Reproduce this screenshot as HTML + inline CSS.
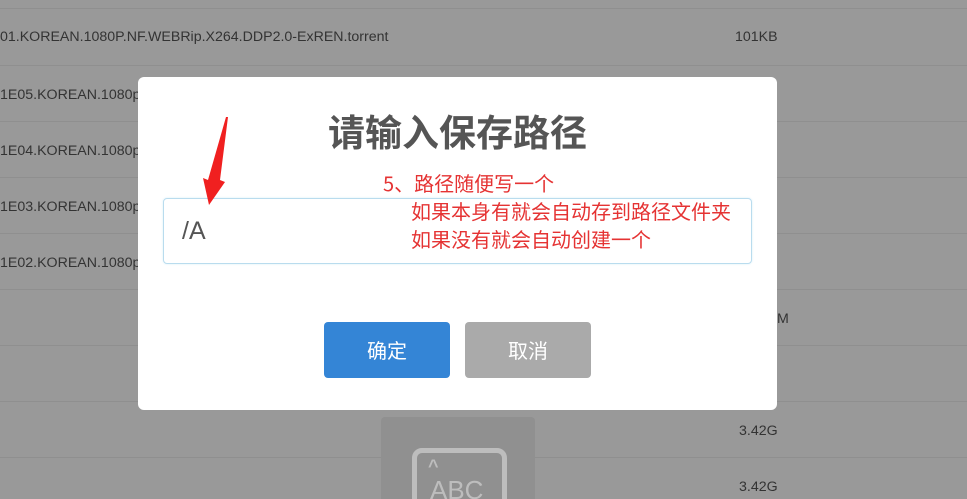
<!DOCTYPE html>
<html style="overflow:hidden;width:967px;height:499px"><head><meta charset="utf-8"><style>
body{margin:0;width:967px;height:499px;overflow:hidden;background:#999;font-family:"Liberation Sans","Noto Sans CJK SC",sans-serif;position:relative}
.sep{position:absolute;left:0;width:967px;height:1px;background:#8f8f8f}
.t{position:absolute;color:#333;font-size:14.2px;white-space:nowrap}
.dlg{position:absolute;left:138px;top:77px;width:639px;height:333px;background:#fff;border-radius:6px}
.red{position:absolute;color:#e53333;font-size:20px;white-space:nowrap;font-family:"Noto Sans CJK SC",sans-serif;line-height:22px}
</style></head><body>
<div class="sep" style="top:8px"></div>
<div class="sep" style="top:65px"></div>
<div class="sep" style="top:121px"></div>
<div class="sep" style="top:177px"></div>
<div class="sep" style="top:233px"></div>
<div class="sep" style="top:289px"></div>
<div class="sep" style="top:345px"></div>
<div class="sep" style="top:401px"></div>
<div class="sep" style="top:457px"></div>
<div class="t" style="left:0;top:29px">01.KOREAN.1080P.NF.WEBRip.X264.DDP2.0-ExREN.torrent</div>
<div class="t" style="left:735px;top:29px">101KB</div>
<div class="t" style="left:0;top:87px">1E05.KOREAN.1080p.</div>
<div class="t" style="left:0;top:143px">1E04.KOREAN.1080p.</div>
<div class="t" style="left:0;top:199px">1E03.KOREAN.1080p.</div>
<div class="t" style="left:0;top:255px">1E02.KOREAN.1080p.</div>
<div class="t" style="left:777px;top:311px">M</div>
<div class="t" style="left:739px;top:423px">3.42G</div>
<div class="t" style="left:739px;top:479px">3.42G</div>
<div style="position:absolute;left:381px;top:417px;width:154px;height:82px;background:#909090;border-radius:4px 4px 0 0;overflow:hidden">
<div style="position:absolute;left:31px;top:31px;width:85px;height:70px;border:5px solid #bdbdbd;border-radius:10px"></div>
<div style="position:absolute;left:49px;top:58px;color:#bdbdbd;font-size:26px">ABC</div>
<div style="position:absolute;left:47px;top:39px;color:#bdbdbd;font-size:18px;font-weight:bold">^</div>
</div>
<div class="dlg"></div>
<div style="position:absolute;left:138px;top:105px;width:639px;text-align:center;font-size:37px;font-weight:bold;color:#555;font-family:'Noto Sans CJK SC',sans-serif;line-height:50px">请输入保存路径</div>
<div style="position:absolute;left:163px;top:198px;width:587px;height:64px;border:1px solid #b9dcee;border-radius:4px;box-shadow:0 0 2px #d8eef8"></div>
<div style="position:absolute;left:182px;top:217px;font-size:25px;color:#555">/A</div>
<div style="position:absolute;left:324px;top:322px;width:126px;height:56px;background:#3485d6;border-radius:4px;color:#fff;font-size:20px;text-align:center;line-height:56px;font-family:'Noto Sans CJK SC',sans-serif">确定</div>
<div style="position:absolute;left:465px;top:322px;width:126px;height:56px;background:#aaa;border-radius:4px;color:#fff;font-size:20px;text-align:center;line-height:56px;font-family:'Noto Sans CJK SC',sans-serif">取消</div>
<div class="red" style="left:383px;top:172px">5、路径随便写一个</div>
<div class="red" style="left:411px;top:200px">如果本身有就会自动存到路径文件夹</div>
<div class="red" style="left:411px;top:228px">如果没有就会自动创建一个</div>
<svg style="position:absolute;left:0;top:0" width="967" height="499"><polygon points="228,117 220,180 225,182 209,205 203,178 208,180 226,117" fill="#f02020"/></svg>
</body></html>
